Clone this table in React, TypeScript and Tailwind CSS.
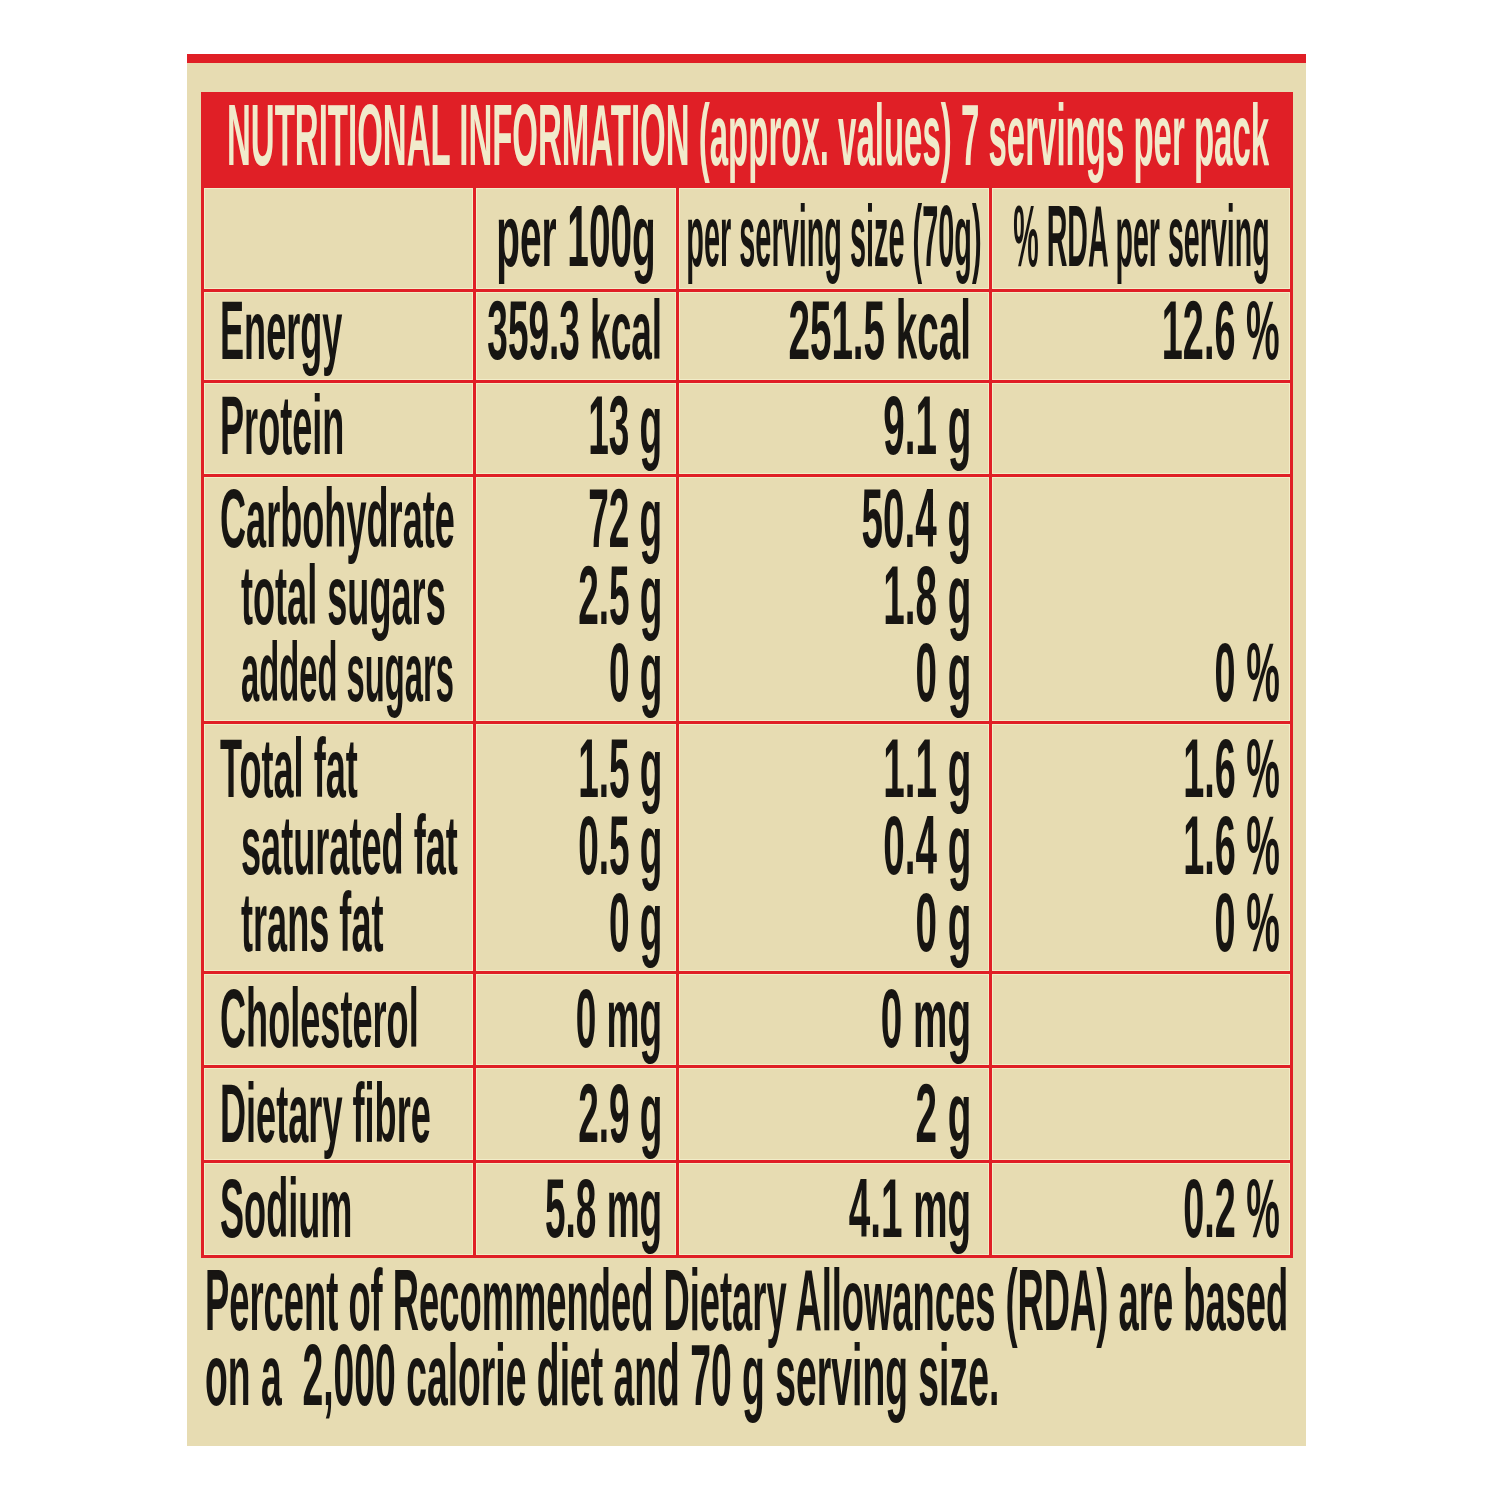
import React from 'react';

type Line = { text: string; sub?: boolean; narrow?: boolean };

interface Row {
  h: string;
  pt: string;
  label: Line[];
  per100: string[];
  perServing: string[];
  rda: string[];
}

const ROWS: Row[] = [
  { h: 'h-[88px]', pt: 'pt-0', label: [{ text: 'Energy' }], per100: ['359.3 kcal'], perServing: ['251.5 kcal'], rda: ['12.6 %'] },
  { h: 'h-[91px]', pt: 'pt-[4px]', label: [{ text: 'Protein' }], per100: ['13 g'], perServing: ['9.1 g'], rda: [] },
  {
    h: 'h-[244px]',
    pt: 'pt-[3px]',
    label: [{ text: 'Carbohydrate' }, { text: 'total sugars', sub: true }, { text: 'added sugars', sub: true, narrow: true }],
    per100: ['72 g', '2.5 g', '0 g'],
    perServing: ['50.4 g', '1.8 g', '0 g'],
    rda: ['', '', '0 %'],
  },
  {
    h: 'h-[247px]',
    pt: 'pt-[6px]',
    label: [{ text: 'Total fat' }, { text: 'saturated fat', sub: true }, { text: 'trans fat', sub: true }],
    per100: ['1.5 g', '0.5 g', '0 g'],
    perServing: ['1.1 g', '0.4 g', '0 g'],
    rda: ['1.6 %', '1.6 %', '0 %'],
  },
  { h: 'h-[91px]', pt: 'pt-[6px]', label: [{ text: 'Cholesterol' }], per100: ['0 mg'], perServing: ['0 mg'], rda: [] },
  { h: 'h-[92px]', pt: 'pt-[7px]', label: [{ text: 'Dietary fibre' }], per100: ['2.9 g'], perServing: ['2 g'], rda: [] },
  { h: 'h-[92px]', pt: 'pt-[7px]', label: [{ text: 'Sodium' }], per100: ['5.8 mg'], perServing: ['4.1 mg'], rda: ['0.2 %'] },
];

const CELL = 'bg-[#e7dcb2] shadow-[inset_0_0_0_1px_#f2edc8]';

function ValueCol({ items, pr, pt, h, sx }: { items: string[]; pr: string; pt: string; h: string; sx: string }) {
  return (
    <div className={`${CELL} ${h} ${pt} ${pr} flex flex-col`}>
      {items.map((v, i) => (
        <div key={i} className="flex justify-end h-[77px]">
          <span className={`shrink-0 whitespace-nowrap origin-right ${sx} leading-[77px] text-[84px] font-bold`}>{v}</span>
        </div>
      ))}
    </div>
  );
}

export default function App() {
  return (
    <div className="w-[1500px] min-h-[1500px] bg-white pt-[54px] pl-[187px] overflow-hidden font-['Liberation_Sans',Arial,sans-serif] text-[#171512]">
      <div className="w-[1119px] h-[1392px] bg-[#e7dcb2] border-t-[9px] border-[#e01f26] pt-[29px] pl-[14px] overflow-hidden">
        {/* Table */}
        <div className="w-[1092px] grid grid-cols-[269px_200px_310px_298px] gap-[3px] p-[3px] bg-[#e01f26]">
          <div className="col-span-4 h-[90px] pl-[23px] flex justify-start">
            <span className="shrink-0 -mt-[4px] whitespace-nowrap origin-left scale-x-[0.375] text-[88px] leading-[88px] font-bold text-[#f1eacb]">
              NUTRITIONAL INFORMATION (approx. values) 7 servings per pack
            </span>
          </div>

          {/* column heads */}
          <div className={`${CELL} h-[101px]`} />
          <div className={`${CELL} h-[101px] pt-[4px] flex justify-center`}>
            <span className="shrink-0 whitespace-nowrap scale-x-[0.44] text-[88px] leading-[88px] font-bold">per 100g</span>
          </div>
          <div className={`${CELL} h-[101px] pt-[4px] flex justify-center`}>
            <span className="shrink-0 whitespace-nowrap scale-x-[0.328] text-[88px] leading-[88px] font-bold">per serving size (70g)</span>
          </div>
          <div className={`${CELL} h-[101px] pt-[4px] flex justify-center`}>
            <span className="shrink-0 whitespace-nowrap scale-x-[0.325] text-[88px] leading-[88px] font-bold">% RDA per serving</span>
          </div>

          {ROWS.map((r, idx) => (
            <React.Fragment key={idx}>
              <div className={`${CELL} ${r.h} ${r.pt} flex flex-col`}>
                {r.label.map((l, i) => (
                  <div key={i} className={`flex justify-start h-[77px] ${l.sub ? 'pl-[37px]' : 'pl-[16px]'}`}>
                    <span
                      className={`shrink-0 whitespace-nowrap origin-left ${l.narrow ? 'scale-x-[0.39]' : 'scale-x-[0.43]'} leading-[77px] text-[84px] font-bold`}
                    >
                      {l.text}
                    </span>
                  </div>
                ))}
              </div>
              <ValueCol items={r.per100} pr="pr-[14px]" pt={r.pt} h={r.h} sx="scale-x-[0.44]" />
              <ValueCol items={r.perServing} pr="pr-[18px]" pt={r.pt} h={r.h} sx="scale-x-[0.46]" />
              <ValueCol items={r.rda} pr="pr-[10px]" pt={r.pt} h={r.h} sx="scale-x-[0.45]" />
            </React.Fragment>
          ))}
        </div>

        {/* Footnote */}
        <div className="mt-[4px] pl-[4px] flex flex-col">
          <div className="flex justify-start h-[75px]">
            <span className="shrink-0 whitespace-nowrap origin-left scale-x-[0.413] text-[88px] leading-[75px] font-bold">
              Percent of Recommended Dietary Allowances (RDA) are based
            </span>
          </div>
          <div className="flex justify-start h-[75px]">
            <span className="shrink-0 whitespace-pre origin-left scale-x-[0.424] text-[88px] leading-[75px] font-bold">
              on a  2,000 calorie diet and 70 g serving size.
            </span>
          </div>
        </div>
      </div>
    </div>
  );
}
